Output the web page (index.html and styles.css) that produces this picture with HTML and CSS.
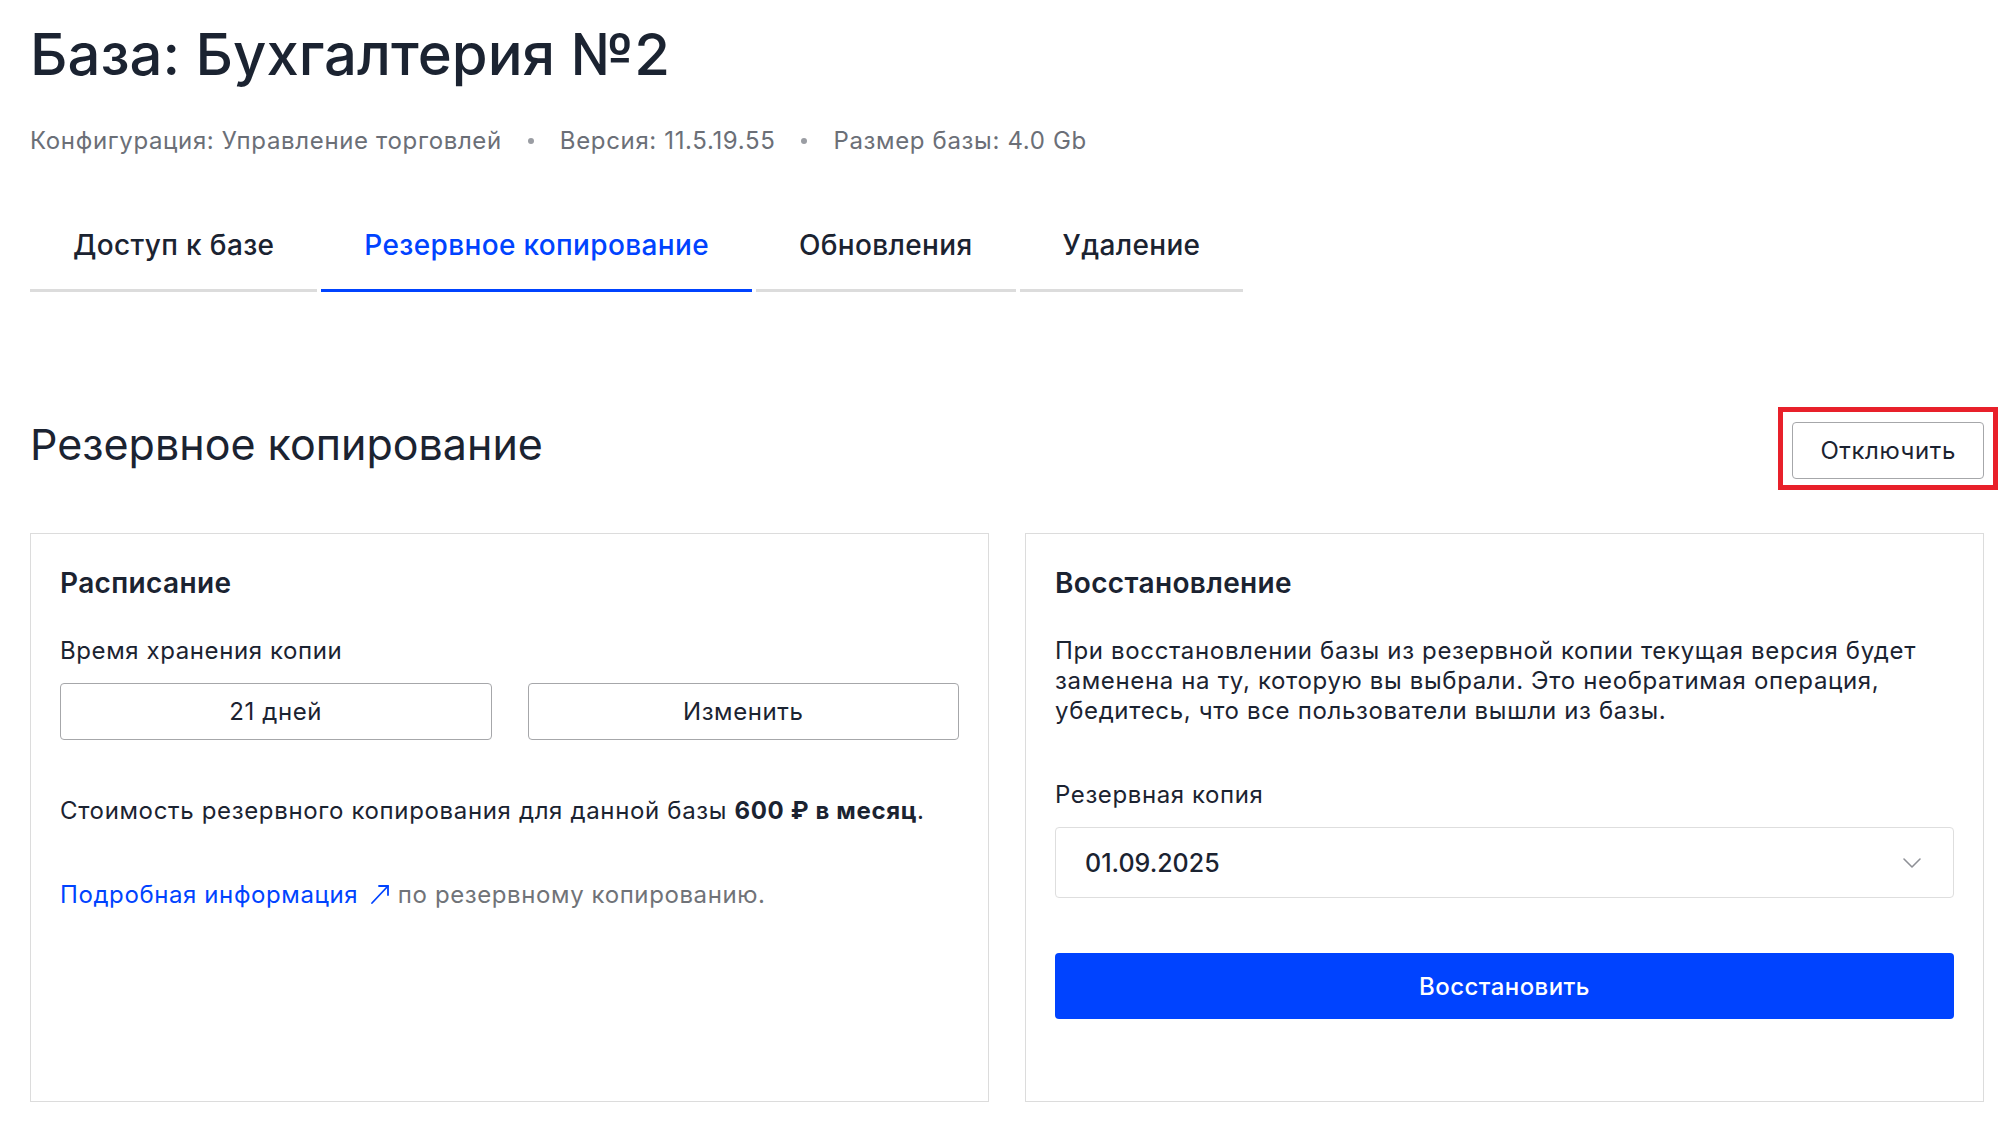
FILE: index.html
```html
<!DOCTYPE html>
<html lang="ru">
<head>
<meta charset="utf-8">
<title>База: Бухгалтерия №2</title>
<link rel="stylesheet" href="styles.css">
</head>
<body>
<div class="page">
  <h1 class="title">База: Бухгалтерия №2</h1>
  <div class="meta">
    <span>Конфигурация: Управление торговлей</span>
    <span class="dot"></span>
    <span>Версия: 11.5.19.55</span>
    <span class="dot"></span>
    <span>Размер базы: 4.0 Gb</span>
  </div>

  <nav class="tabs">
    <div class="tab">Доступ к базе</div>
    <div class="tab active">Резервное копирование</div>
    <div class="tab">Обновления</div>
    <div class="tab">Удаление</div>
  </nav>

  <div class="section-head">
    <h2 class="section-title">Резервное копирование</h2>
    <div class="btn-wrap">
      <button class="btn">Отключить</button>
      <span class="highlight"></span>
    </div>
  </div>

  <div class="cards">
    <section class="card">
      <h3 class="card-title">Расписание</h3>
      <div class="label">Время хранения копии</div>
      <div class="btn-row">
        <button class="btn wide">21 дней</button>
        <button class="btn wide">Изменить</button>
      </div>
      <p class="cost">Стоимость резервного копирования для данной базы <b>600 ₽ в месяц</b>.</p>
      <p class="more"><a class="link" href="#">Подробная информация <svg class="ext" width="20" height="22" viewBox="0 0 20 22" fill="none" stroke="currentColor" stroke-width="1.8" stroke-linecap="round" stroke-linejoin="round"><path d="M2 20 L18 3"/><path d="M9 3 H18 V12"/></svg></a> по резервному копированию.</p>
    </section>

    <section class="card">
      <h3 class="card-title">Восстановление</h3>
      <p class="desc">При восстановлении базы из резервной копии текущая версия будет заменена на ту, которую вы выбрали. Это необратимая операция, убедитесь, что все пользователи вышли из базы.</p>
      <div class="label label-gap">Резервная копия</div>
      <div class="select">
        <span class="select-value">01.09.2025</span>
        <svg class="chev" width="20" height="12" viewBox="0 0 20 12" fill="none" stroke="#8e9096" stroke-width="1.6" stroke-linecap="round" stroke-linejoin="round"><path d="M2 2 L10 10 L18 2"/></svg>
      </div>
      <button class="btn-primary">Восстановить</button>
    </section>
  </div>
</div>
</body>
</html>
```
FILE: styles.css
```css
* { box-sizing: border-box; }
html, body { margin: 0; padding: 0; background: #ffffff; }
body {
  font-family: "Inter", "Noto Sans", "Liberation Sans", sans-serif;
  color: #1b2331;
}
.page {
  padding: 19px 24px 0 30px;
}
.title {
  margin: 0;
  font-size: 58px;
  line-height: 70px;
  font-weight: 500;
}
.meta {
  margin-top: 37px;
  display: flex;
  align-items: center;
  gap: 26px;
  font-size: 24px;
  line-height: 30px;
  letter-spacing: 0.65px;
  color: #6b6f77;
}
.dot {
  width: 6px;
  height: 6px;
  border-radius: 50%;
  background: #9a9da3;
}
.tabs {
  margin-top: 52px;
  display: flex;
  gap: 4px;
}
.tab {
  padding: 20px 43px 27px;
  font-size: 28px;
  line-height: 34px;
  font-weight: 500;
  letter-spacing: 0.35px;
  border-bottom: 3px solid #dcdcdc;
  color: #1b2331;
}
.tab.active {
  color: #0043ff;
  border-bottom-color: #0043ff;
}
.section-head {
  margin-top: 125px;
  display: flex;
  justify-content: space-between;
  align-items: flex-start;
}
.section-title {
  margin: 0;
  font-size: 43px;
  line-height: 54px;
  font-weight: 400;
}
.btn-wrap {
  position: relative;
  margin-top: 5px;
}
.btn {
  font-family: inherit;
  font-size: 24px;
  line-height: 30px;
  letter-spacing: 0.6px;
  color: #1b2331;
  background: #ffffff;
  border: 1px solid #a6a7aa;
  border-radius: 4px;
  height: 57px;
  padding: 0 27px;
  cursor: pointer;
}
.highlight {
  position: absolute;
  left: -14px;
  right: -14px;
  top: -15px;
  bottom: -11px;
  border: 5px solid #e8202a;
  pointer-events: none;
}
.cards {
  margin-top: 54px;
  display: grid;
  grid-template-columns: 1fr 1fr;
  gap: 36px;
}
.card {
  border: 1px solid #dcdcdc;
  padding: 32px 29px 82px;
}
.card-title {
  margin: 0;
  font-size: 28px;
  line-height: 34px;
  font-weight: 600;
  letter-spacing: 0.35px;
}
.label {
  margin-top: 36px;
  font-size: 24px;
  line-height: 30px;
  letter-spacing: 0.6px;
}
.label.label-gap { margin-top: 54px; }
.btn-row {
  margin-top: 17px;
  display: grid;
  grid-template-columns: 1fr 1fr;
  gap: 36px;
}
.btn.wide { width: 100%; }
.cost {
  margin: 56px 0 0;
  font-size: 24px;
  line-height: 30px;
  letter-spacing: 0.65px;
}
.cost b { font-weight: 700; }
.more {
  margin: 54px 0 0;
  font-size: 24px;
  line-height: 30px;
  letter-spacing: 0.6px;
  color: #707378;
}
.link {
  color: #0043ff;
  text-decoration: none;
}
.ext {
  vertical-align: -2px;
  margin-left: 5px;
}
.desc {
  margin: 36px 0 0;
  font-size: 24px;
  line-height: 30px;
  letter-spacing: 0.65px;
}
.select {
  margin-top: 17px;
  height: 71px;
  border: 1px solid #dedede;
  border-radius: 4px;
  display: flex;
  align-items: center;
  justify-content: space-between;
  padding: 0 31px 0 29px;
}
.select-value {
  font-size: 25px;
  font-weight: 500;
}
.btn-primary {
  display: block;
  width: 100%;
  margin-top: 55px;
  height: 66px;
  border: none;
  border-radius: 4px;
  background: #0043ff;
  color: #ffffff;
  font-family: inherit;
  font-size: 24px;
  font-weight: 500;
  letter-spacing: 0.45px;
  cursor: pointer;
}
```
